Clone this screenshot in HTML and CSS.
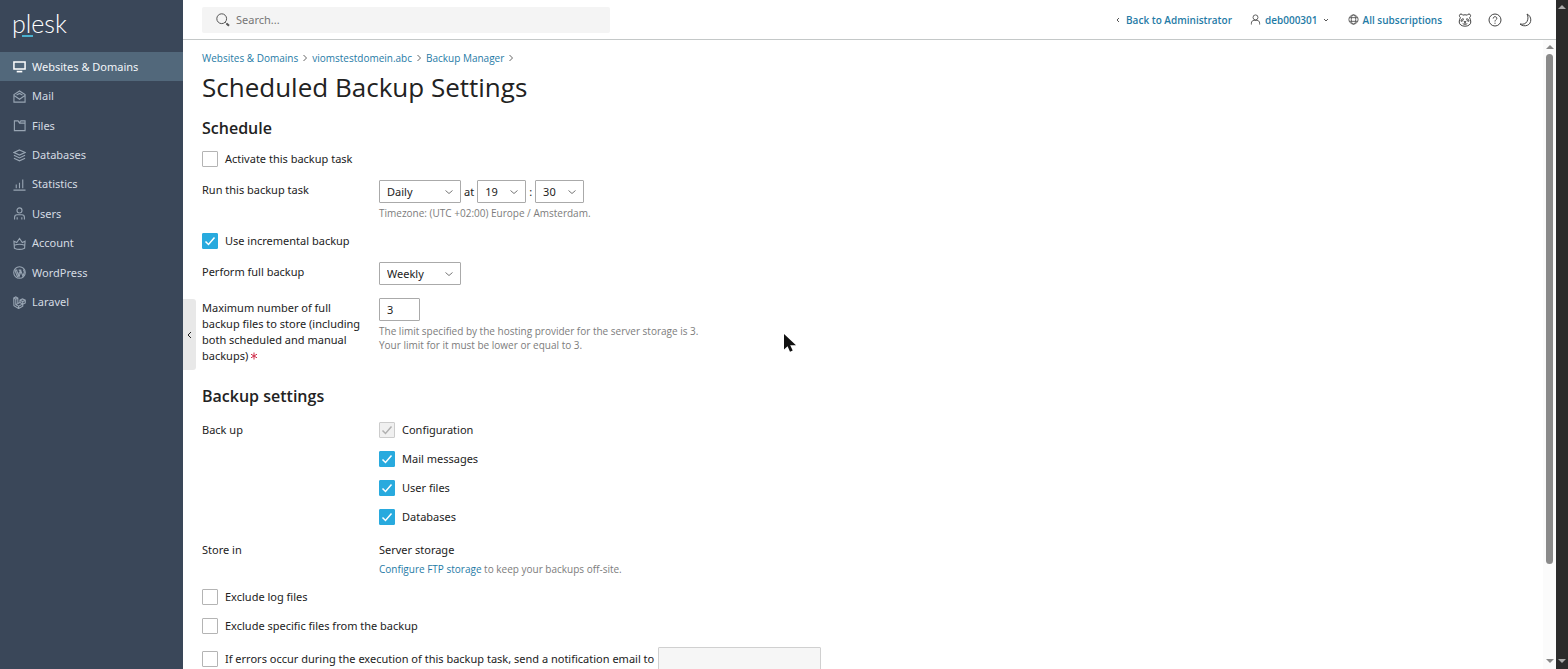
FILE: index.html
```html
<!DOCTYPE html>
<html lang="en">
<head>
<meta charset="utf-8">
<title>Scheduled Backup Settings - Plesk</title>
<link rel="stylesheet" href="styles.css">
</head>
<body>
<div class="app">
  <aside class="sidebar">
    <a class="logo" href="#">plesk</a>
    <nav class="nav">
      <a class="nav-item active" href="#"><svg class="icon" viewBox="0 0 14 14"><path d="M1 2.200h12v7.600H1z" stroke-width="1.600"/><path d="M4 12.500h6" stroke-width="1.800"/></svg>Websites &amp; Domains</a>
      <a class="nav-item" href="#"><svg class="icon" viewBox="0 0 14 14"><path d="M1 5 7 1l6 4v8H1zM1.200 6 7 10l5.800-4M3.800 5.500 7 3.700l3.200 1.800"/></svg>Mail</a>
      <a class="nav-item" href="#"><svg class="icon" viewBox="0 0 14 14"><path d="M1.500 2h4l1.500 2.500h6v8H1.500zM8 2h5v2.500M7 4.500 8 2"/></svg>Files</a>
      <a class="nav-item" href="#"><svg class="icon" viewBox="0 0 14 14"><path d="M7 1 13 3.800 7 6.600 1 3.800zM1 6.800 7 9.600l6-2.800M1 9.900l6 2.800 6-2.800"/></svg>Databases</a>
      <a class="nav-item" href="#"><svg class="icon" viewBox="0 0 14 14"><path d="M.5 13h13M3.500 11V7M7 11V5M10.500 11V1.500"/></svg>Statistics</a>
      <a class="nav-item" href="#"><svg class="icon" viewBox="0 0 14 14"><circle cx="7" cy="3.700" r="2.700"/><path d="M1.700 13.500v-2.300c0-2 1.200-2.900 2.800-2.900h5c1.600 0 2.800.9 2.800 2.900v2.300M4.500 11v2.500M9.500 11v2.500"/></svg>Users</a>
      <a class="nav-item" href="#"><svg class="icon" viewBox="0 0 14 14"><path d="M1 4.500 4 6l3-4.500L10 6l3-1.500-.5 7.500c-3 1.500-8 1.500-11 0zM1.400 9c3-1.300 8.200-1.300 11.200 0"/></svg>Account</a>
      <a class="nav-item" href="#"><svg class="icon" viewBox="0 0 14 14"><circle cx="7" cy="7" r="6.200"/><path d="M2 4.500 5 12M2 4.300h2.700M3.800 4.500l2.700 7L8 7.200 7 4.500M6 4.300h3M8.200 4.500l2.500 6.700 1.500-4.500c.1-1.200-.8-1.800-.9-3"/><path d="M5 12 7 6.500"/></svg>WordPress</a>
      <a class="nav-item" href="#"><svg class="icon" viewBox="0 0 14 14"><path d="M.8 2.200 3 1l2.200 1.200v6L7.500 7V4.500l2.700-1.400 3 1.400v3L10.500 9v2L6 13.500 1 10.500zM.8 2.200 3 3.400l2.200-1.200M3 3.400v6L6 11l4.500-2.500M7.500 4.500l3 1.500 2.700-1.500M10.500 6v2.800M7.500 7l3 1.700M3 9.400l2.200-1.200M6 11v2.500"/></svg>Laravel</a>
    </nav>
  </aside>

  <div class="workspace">
    <header class="topbar">
      <label class="search">
        <svg class="search-icon" viewBox="0 0 14 14"><circle cx="5.700" cy="5.700" r="4.900"/><path d="m9.300 9.300 1.200 1.200"/><path d="m10.500 10.500 2.500 2.300" stroke-width="2"/></svg>
        <input type="search" placeholder="Search..." aria-label="Search">
      </label>
      <div class="tools">
        <a class="tool back" href="#"><svg class="mini" viewBox="0 0 8 8"><path d="M5 2 3 4l2 2"/></svg>Back to Administrator</a>
        <a class="tool user" href="#"><svg class="tool-icon" viewBox="0 0 12 12"><circle cx="6" cy="3.700" r="2.700"/><path d="M1.500 11.500V10c0-2 1.300-3 3-3h3c1.700 0 3 1 3 3v1.500"/></svg>deb000301<svg class="mini" viewBox="0 0 8 8"><path d="m2 3 2 2 2-2"/></svg></a>
        <a class="tool subs" href="#"><svg class="tool-icon" viewBox="0 0 12 12"><circle cx="6" cy="6" r="5"/><ellipse cx="6" cy="6" rx="2.400" ry="5"/><path d="M1.500 4h9M1.500 8h9"/></svg>All subscriptions</a>
        <button class="icon-button" type="button" aria-label="Assistant"><svg viewBox="0 0 14 14"><path d="M2.400 4.600C.8 3.400 1.200 1 3 1c1 0 1.500.6 1.800 1.200 1.400-.5 3-.5 4.400 0C9.500 1.600 10 1 11 1c1.800 0 2.200 2.400.6 3.600.7 1.300 1.200 3 1.200 4.400 0 2.600-2.600 4.200-5.800 4.200S1.200 11.600 1.200 9c0-1.400.5-3.100 1.200-4.400z"/><path d="M3 8.200c0-1.400.8-2.400 2.300-2.400.3 1.200-.6 2.600-2.300 2.400zM11 8.200c0-1.400-.8-2.400-2.300-2.400-.3 1.200.6 2.600 2.300 2.400zM6 8.700h2L7 9.800zM7 9.800v1M4.700 10.500c1 1 3.600 1 4.600 0"/></svg></button>
        <button class="icon-button" type="button" aria-label="Help"><svg viewBox="0 0 14 14"><circle cx="7" cy="7" r="6"/><path d="M5.200 5.500C5.200 3 9 3.200 8.800 5.500 8.700 6.800 7 6.800 7 8.500M7 9.700v1.100"/></svg></button>
        <button class="icon-button" type="button" aria-label="Dark mode"><svg viewBox="0 0 14 14"><path d="M9 1c5 2.300 5 9.500.3 11.300-2.500 1-5.500.5-7.300-1.300 3.200.7 5.800-.2 7-2.500C10.200 6.300 10.400 3.500 9 1z"/></svg></button>
      </div>
    </header>

    <div class="body">
      <button class="collapse" type="button" aria-label="Collapse sidebar"><svg viewBox="0 0 8 8"><path d="M5 1 2 4l3 3"/></svg></button>
      <main class="content">
        <nav class="crumbs" aria-label="Breadcrumb">
          <a href="#">Websites &amp; Domains</a><svg viewBox="0 0 8 8"><path d="m2.500 1 3 3-3 3"/></svg>
          <a href="#">viomstestdomein.abc</a><svg viewBox="0 0 8 8"><path d="m2.500 1 3 3-3 3"/></svg>
          <a href="#">Backup Manager</a><svg viewBox="0 0 8 8"><path d="m2.500 1 3 3-3 3"/></svg>
        </nav>
        <h1>Scheduled Backup Settings</h1>

        <form class="form">
          <h2>Schedule</h2>
          <label class="check"><input type="checkbox">Activate this backup task</label>
          <div class="row">
            <label class="name" for="period">Run this backup task</label>
            <div class="field">
              <div class="inline">
                <span class="select wide"><select id="period"><option>Daily</option></select><svg viewBox="0 0 8 8"><path d="m.5 2.500 3.500 3 3.500-3"/></svg></span>
                <span>at</span>
                <span class="select"><select aria-label="Hour"><option>19</option></select><svg viewBox="0 0 8 8"><path d="m.5 2.500 3.500 3 3.500-3"/></svg></span>
                <span>:</span>
                <span class="select"><select aria-label="Minute"><option>30</option></select><svg viewBox="0 0 8 8"><path d="m.5 2.500 3.500 3 3.500-3"/></svg></span>
              </div>
              <p class="hint">Timezone: (UTC +02:00) Europe / Amsterdam.</p>
            </div>
          </div>
          <label class="check"><input type="checkbox" checked>Use incremental backup</label>
          <div class="row">
            <label class="name" for="full">Perform full backup</label>
            <div class="field">
              <span class="select wide"><select id="full"><option>Weekly</option></select><svg viewBox="0 0 8 8"><path d="m.5 2.500 3.500 3 3.500-3"/></svg></span>
            </div>
          </div>
          <div class="row">
            <label class="name" for="max">Maximum number of full backup files to store (including both scheduled and manual backups)<svg class="required" viewBox="0 0 8 8"><path d="M4 .5v7M1 2.200l6 3.600M7 2.200 1 5.800"/></svg></label>
            <div class="field">
              <input class="text short" id="max" type="text" value="3">
              <p class="hint">The limit specified by the hosting provider for the server storage is 3.<br>Your limit for it must be lower or equal to 3.</p>
            </div>
          </div>

          <h2 class="second">Backup settings</h2>
          <div class="row flat">
            <span class="name" id="backup-label">Back up</span>
            <div class="field checks" role="group" aria-labelledby="backup-label">
              <label class="check"><input type="checkbox" checked disabled>Configuration</label>
              <label class="check"><input type="checkbox" checked>Mail messages</label>
              <label class="check"><input type="checkbox" checked>User files</label>
              <label class="check"><input type="checkbox" checked>Databases</label>
            </div>
          </div>
          <div class="row flat store">
            <span class="name">Store in</span>
            <div class="field">
              <span>Server storage</span>
              <p class="hint"><a href="#">Configure FTP storage</a> to keep your backups off-site.</p>
            </div>
          </div>
          <label class="check"><input type="checkbox">Exclude log files</label>
          <label class="check"><input type="checkbox">Exclude specific files from the backup</label>
          <div class="notify">
            <label class="check"><input type="checkbox">If errors occur during the execution of this backup task, send a notification email to</label>
            <input class="text email" type="email" aria-label="Notification email" disabled>
          </div>
        </form>
      </main>
      <div class="scroll">
        <svg viewBox="0 0 8 4"><path d="m0 4 4-4 4 4z"/></svg>
        <div class="track"><div class="thumb"></div></div>
        <svg viewBox="0 0 8 4"><path d="m0 0 4 4 4-4z"/></svg>
      </div>
    </div>
  </div>
  <div class="scroll outer">
    <svg viewBox="0 0 8 4"><path d="m0 4 4-4 4 4z"/></svg>
    <svg viewBox="0 0 8 4"><path d="m0 0 4 4 4-4z"/></svg>
  </div>
  <svg class="pointer" viewBox="0 0 12 18"><path d="M0 0v15.500l3.600-3.300L6 17.800l2.700-1.200-2.500-5.300H12z"/></svg>
</div>
</body>
</html>
```
FILE: styles.css
```css
* { box-sizing: border-box; }

body {
  margin: 0;
  background: #fff;
  color: #222;
  font: 11px/16px "Noto Sans", "Open Sans", sans-serif;
}

a { color: #1f7ba6; text-decoration: none; }
h1, h2, p { margin: 0; }
h1, h2, .hint, .crumbs, .tool { font-family: "Open Sans", "Noto Sans", sans-serif; }
svg { flex: none; fill: none; stroke: currentColor; }
button { padding: 0; border: 0; background: none; color: inherit; }
input, select { margin: 0; color: inherit; font: inherit; }

.app {
  position: relative;
  display: flex;
  height: 100vh;
  overflow: hidden;
}

/* Sidebar */
.sidebar {
  flex: none;
  width: 183px;
  background: #3a4759;
}
.logo {
  position: relative;
  display: block;
  height: 52px;
  padding: 7px 12px;
  color: #fff;
  font: 300 25px/32px Lato, sans-serif;
}
.logo::after {
  content: "";
  position: absolute;
  left: 22px;
  top: 35px;
  width: 11px;
  height: 2px;
  background: #4bb1cf;
}
.nav-item {
  display: flex;
  align-items: center;
  gap: 6px;
  padding-left: 13px;
  color: #d5dbe2;
}
.nav { display: grid; grid-auto-rows: 1fr; height: 265px; }
.nav-item .icon { width: 13px; height: 13px; color: #98a5b3; stroke-width: 1.2; }
.nav-item.active { background: #52687b; color: #f2f6f9; }
.nav-item.active .icon { color: #fff; }

/* Header */
.workspace {
  display: flex;
  flex: 1;
  flex-direction: column;
  min-width: 0;
}
.topbar {
  display: flex;
  flex: none;
  justify-content: space-between;
  align-items: center;
  height: 40px;
  padding: 0 24px 0 19px;
  border-bottom: 1px solid #c4c8c8;
}
.search {
  display: flex;
  align-items: center;
  gap: 6px;
  width: 408px;
  height: 26px;
  padding: 0 14px;
  border-radius: 2px;
  background: #f4f4f4;
}
.search-icon { width: 14px; height: 14px; color: #555; }
.search input {
  flex: 1;
  min-width: 0;
  padding: 0;
  border: 0;
  outline: 0;
  background: none;
}
.search input::placeholder { color: #767676; }
.tools { display: flex; align-items: center; }
.tool {
  display: flex;
  align-items: center;
  gap: 4px;
  font-size: 10px;
  font-weight: 600;
}
.tool svg { color: #555; }
.user, .subs { margin-left: 18px; }
.mini { width: 8px; height: 8px; }
.tool-icon { width: 11px; height: 11px; }
.icon-button { width: 14px; height: 14px; margin-left: 16px; color: #444; }
.icon-button svg { display: block; }

/* Content */
.body {
  position: relative;
  display: flex;
  flex: 1;
  min-height: 0;
}
.collapse {
  position: absolute;
  left: 0;
  top: 259px;
  width: 13px;
  height: 71px;
  border-radius: 0 3px 3px 0;
  background: #e8e8e8;
}
.collapse svg { display: block; width: 8px; height: 8px; margin: 0 auto; }
.content {
  flex: 1;
  min-width: 0;
  padding: 10px 20px 0 19px;
  overflow: hidden;
}
.crumbs {
  display: flex;
  align-items: center;
  gap: 3px;
  font-size: 10px;
}
.crumbs svg { width: 8px; height: 8px; color: #666; }
h1 { margin-top: 3px; font-size: 26px; font-weight: 400; line-height: 36px; }
h2 { margin-top: 12px; font-size: 16px; font-weight: 600; line-height: 22px; }

.form { display: flex; flex-direction: column; gap: 13px; }
h2 + .check { margin-top: -1px; }
h2.second { margin-top: 8px; }
h2 + .flat { margin-top: 2px; }
.check { display: flex; align-items: center; gap: 7px; }
.check input {
  appearance: none;
  flex: none;
  width: 16px;
  height: 16px;
  border: 1px solid #b4b4b4;
  border-radius: 1px;
  background: #fff center / 14px no-repeat;
}
.check input:checked {
  border-color: #28aade;
  background-color: #28aade;
  background-image: url("data:image/svg+xml,%3Csvg xmlns='http://www.w3.org/2000/svg' viewBox='0 0 14 14'%3E%3Cpath d='M2.500 7.500l3 3 6-7' fill='none' stroke='white' stroke-width='1.500'/%3E%3C/svg%3E");
}
.check input:disabled {
  border-color: #ccc;
  background-color: #f0f0f0;
  background-image: url("data:image/svg+xml,%3Csvg xmlns='http://www.w3.org/2000/svg' viewBox='0 0 14 14'%3E%3Cpath d='M2.500 7.500l3 3 6-7' fill='none' stroke='%23b0b0b0' stroke-width='1.500'/%3E%3C/svg%3E");
}
.row { display: flex; gap: 12px; }
.name { flex: none; width: 165px; padding-top: 2px; }
.flat .name { padding-top: 0; }
.inline { display: flex; align-items: center; gap: 3px; }
.hint { margin-top: 3px; color: #7c7c7c; font-size: 10px; line-height: 14px; }
.select { position: relative; display: block; width: 49px; height: 23px; }
.select.wide { width: 82px; }
.select select {
  appearance: none;
  width: 100%;
  height: 100%;
  padding: 0 20px 0 7px;
  border: 1px solid #aaa;
  border-radius: 1px;
  background: #fff;
}
.select svg {
  position: absolute;
  right: 8px;
  top: 8px;
  width: 8px;
  height: 8px;
  color: #777;
  pointer-events: none;
}
.text {
  display: block;
  height: 23px;
  padding: 0 7px;
  border: 1px solid #aaa;
  border-radius: 1px;
  background: #fff;
}
.text.short { width: 41px; }
.text.email { width: 163px; border-color: #d0d0d0; background: #f6f6f6; }
.required { width: 8px; height: 8px; margin-left: 2px; color: #d02f4b; }
.checks { display: grid; gap: 13px; }
.store { margin-top: 4px; }
.store .hint { margin-top: 4px; }
.notify { display: flex; align-items: center; gap: 4px; }

/* Scrollbars */
.scroll {
  display: flex;
  flex: none;
  flex-direction: column;
  align-items: center;
  gap: 5px;
  width: 13px;
  padding: 5px 0 6px;
  background: #fbfbfb;
}
.scroll svg { width: 8px; height: 4px; fill: #888; stroke: none; }
.track { flex: 1; width: 7px; }
.thumb { height: 85%; border-radius: 4px; background: #8a8a8a; }
.outer {
  justify-content: space-between;
  width: 12px;
  background: #2b2b2b;
}
.outer svg { fill: #aaa; }

.pointer {
  position: absolute;
  left: 50%;
  top: 334px;
  width: 12px;
  height: 18px;
  fill: #111;
  stroke: none;
}
```
